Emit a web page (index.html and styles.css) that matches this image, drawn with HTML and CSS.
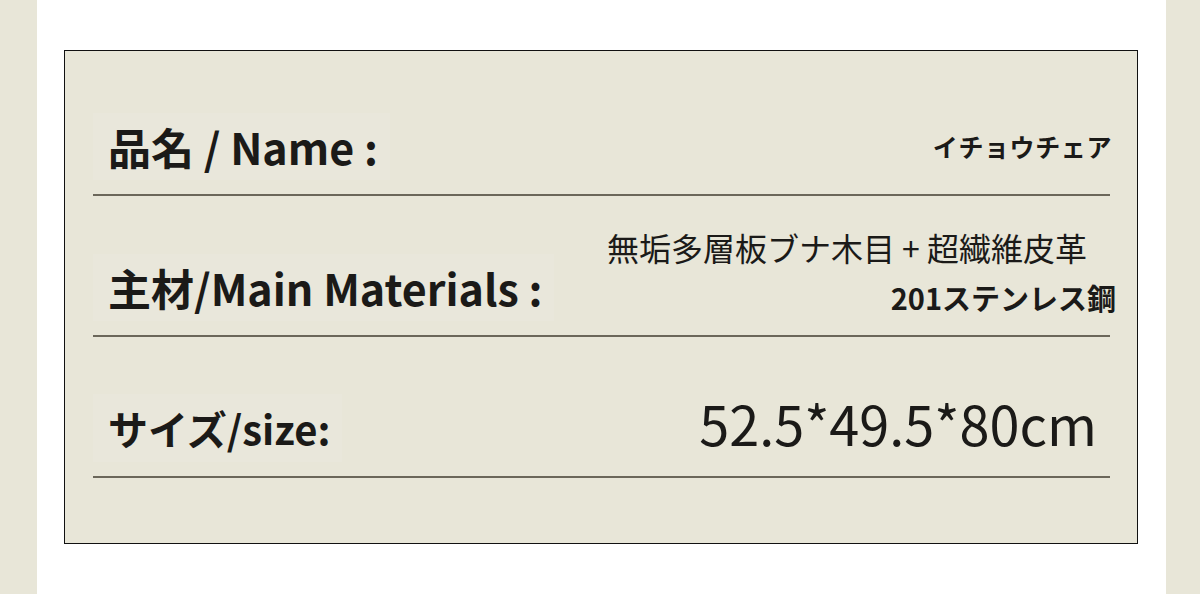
FILE: index.html
```html
<!doctype html>
<html lang="ja">
<head>
  <meta charset="utf-8">
  <title>イチョウチェア 仕様</title>
  <link rel="stylesheet" href="styles.css">
</head>
<body>
<div class="page">
    <div class="side side-left"></div>
    <div class="center">
        <div class="spec">
            <!-- 品名 -->
            <div class="row">
                <div class="label">品名 / Name :</div>
                <div class="value value-name">イチョウチェア</div>
            </div>
            <!-- 素材 -->
            <div class="row">
                <div class="label">主材/Main Materials :</div>
                <div class="value value-material">
                    <span class="mat-main">無垢多層板ブナ木目 + 超繊維皮革</span>
                    <span class="mat-sub">201ステンレス鋼</span>
                </div>
            </div>
            <!-- サイズ -->
            <div class="row">
                <div class="label label-small">サイズ/size:</div>
                <div class="value value-size">52.5*49.5*80cm</div>
            </div>
        </div>
    </div>
    <div class="side side-right"></div>
</div>
</body>
</html>
```

FILE: styles.css
```css
* {
    margin: 0;
    padding: 0;
    box-sizing: border-box;
}
body {
    background-color: #ffffff;
    font-family: "Noto Sans CJK JP", "Noto Sans", sans-serif;
    color: #1b1a18;
}
.page {
    display: flex;
    height: 594px;
}
.side {
    background-color: #e8e6d8;
}
.side-left {
    width: 37px;
}
.side-right {
    width: 34px;
}
.center {
    flex: 1;
    padding: 50px 28px 0 27px;
}
.spec {
    background-color: #e8e6d8;
    border: 1px solid #111111;
    padding: 4px 27px 65px 28px;
}
.row {
    display: flex;
    justify-content: space-between;
    align-items: center;
    height: 141px;
    padding-top: 43px;
    border-bottom: 2px solid #6b675a;
}
.label {
    font-size: 43px;
    font-weight: 700;
    line-height: 1;
    padding: 12px 12px 12px 15px;
    background-color: #e9e7db;
}
.label-small {
    font-size: 40px;
    padding-top: 14px;
    padding-bottom: 14px;
}
.value {
    text-align: right;
}
.value-name {
    font-size: 25px;
    font-weight: 700;
    letter-spacing: 0.6px;
    margin-right: -2px;
}
.value-material {
    display: flex;
    flex-direction: column;
    align-items: flex-end;
    margin-top: -30px;
}
.mat-main {
    font-size: 32px;
    font-weight: 400;
    line-height: 50px;
    margin-right: 23px;
}
.mat-sub {
    font-size: 29px;
    font-weight: 700;
    line-height: 50px;
    margin-right: -6px;
}
.value-size {
    font-size: 54px;
    font-weight: 400;
    margin-right: 13px;
    margin-top: -12px;
}
```
